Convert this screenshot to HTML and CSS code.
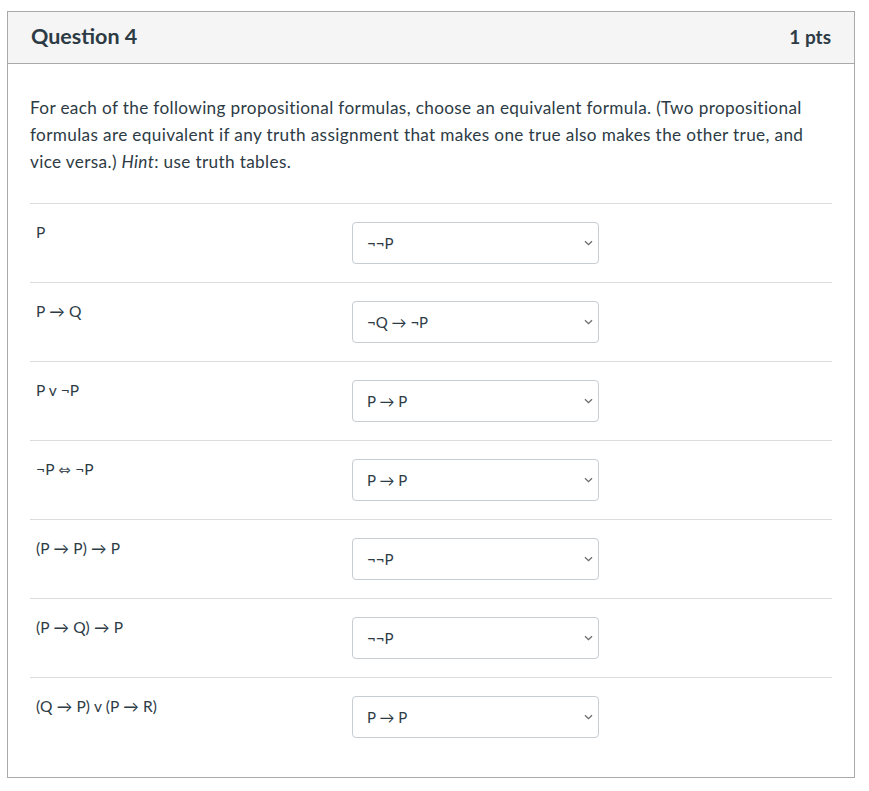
FILE: index.html
```html
<!DOCTYPE html>
<html lang="en">
<head>
<meta charset="utf-8">
<title>Question 4</title>
<link rel="stylesheet" href="styles.css">
</head>
<body>
<div class="card">
  <div class="card-header">
    <h2 class="title">Question 4</h2>
    <span class="pts">1 pts</span>
  </div>
  <div class="card-body">
    <p class="prompt">For each of the following propositional formulas, choose an equivalent formula. (Two propositional formulas are equivalent if any truth assignment that makes one true also makes the other true, and vice versa.) <em>Hint</em>: use truth tables.</p>
    <div class="rows">
      <div class="row">
        <div class="label">P</div>
        <div class="select"><span class="value">¬¬P</span><svg class="chev" width="9" height="6" viewBox="0 0 9 6"><path d="M1 1.2 L4.5 4.6 L8 1.2" fill="none" stroke="#6b6b6b" stroke-width="1.3"/></svg></div>
      </div>
      <div class="row">
        <div class="label">P → Q</div>
        <div class="select"><span class="value">¬Q → ¬P</span><svg class="chev" width="9" height="6" viewBox="0 0 9 6"><path d="M1 1.2 L4.5 4.6 L8 1.2" fill="none" stroke="#6b6b6b" stroke-width="1.3"/></svg></div>
      </div>
      <div class="row">
        <div class="label">P v ¬P</div>
        <div class="select"><span class="value">P → P</span><svg class="chev" width="9" height="6" viewBox="0 0 9 6"><path d="M1 1.2 L4.5 4.6 L8 1.2" fill="none" stroke="#6b6b6b" stroke-width="1.3"/></svg></div>
      </div>
      <div class="row">
        <div class="label">¬P <span class="iff">⇔</span> ¬P</div>
        <div class="select"><span class="value">P → P</span><svg class="chev" width="9" height="6" viewBox="0 0 9 6"><path d="M1 1.2 L4.5 4.6 L8 1.2" fill="none" stroke="#6b6b6b" stroke-width="1.3"/></svg></div>
      </div>
      <div class="row">
        <div class="label">(P → P) → P</div>
        <div class="select"><span class="value">¬¬P</span><svg class="chev" width="9" height="6" viewBox="0 0 9 6"><path d="M1 1.2 L4.5 4.6 L8 1.2" fill="none" stroke="#6b6b6b" stroke-width="1.3"/></svg></div>
      </div>
      <div class="row">
        <div class="label">(P → Q) → P</div>
        <div class="select"><span class="value">¬¬P</span><svg class="chev" width="9" height="6" viewBox="0 0 9 6"><path d="M1 1.2 L4.5 4.6 L8 1.2" fill="none" stroke="#6b6b6b" stroke-width="1.3"/></svg></div>
      </div>
      <div class="row">
        <div class="label">(Q → P) v (P → R)</div>
        <div class="select"><span class="value">P → P</span><svg class="chev" width="9" height="6" viewBox="0 0 9 6"><path d="M1 1.2 L4.5 4.6 L8 1.2" fill="none" stroke="#6b6b6b" stroke-width="1.3"/></svg></div>
      </div>
    </div>
  </div>
</div>
</body>
</html>
```

FILE: styles.css
```css
html, body {
  margin: 0;
  padding: 0;
  background: #ffffff;
}

body {
  font-family: Lato, "Liberation Sans", sans-serif;
  color: #2d3b45;
  font-size: 16px;
}

.card {
  width: 848px;
  box-sizing: border-box;
  margin: 11px 0 0 7px;
  border: 1px solid #a9a9a9;
  background: #ffffff;
}

.card-header {
  display: flex;
  align-items: center;
  justify-content: space-between;
  height: 48px;
  box-sizing: content-box;
  padding: 0 23px 3px 23px;
  background: #f5f5f5;
  border-bottom: 1px solid #a9a9a9;
}

.title {
  margin: 0;
  font-size: 21.5px;
  font-weight: 700;
  color: #2d3b45;
}

.pts {
  font-size: 19px;
  font-weight: 700;
  color: #2d3b45;
}

.card-body {
  padding: 30px 22px 21px 22px;
}

.prompt {
  margin: 0;
  font-size: 17.2px;
  letter-spacing: 0.35px;
  line-height: 27px;
}

.prompt em {
  font-style: italic;
}

.rows {
  margin-top: 28px;
}

.row {
  display: flex;
  align-items: flex-start;
  border-top: 1px solid #dddddd;
  padding: 18px 0;
}

.label {
  width: 322px;
  padding-left: 6px;
  box-sizing: border-box;
  font-size: 15.5px;
  letter-spacing: 0.15px;
  line-height: 20px;
}

.iff {
  font-family: "DejaVu Sans", sans-serif;
  font-size: 15px;
  color: #4a5560;
}

.select {
  display: flex;
  align-items: center;
  justify-content: space-between;
  width: 247px;
  height: 42px;
  box-sizing: border-box;
  border: 1px solid #c7cdd1;
  border-radius: 4px;
  padding: 0 5px 0 14px;
  font-size: 15px;
  color: #2d3b45;
  background: #ffffff;
}

.chev {
  display: block;
}
```
